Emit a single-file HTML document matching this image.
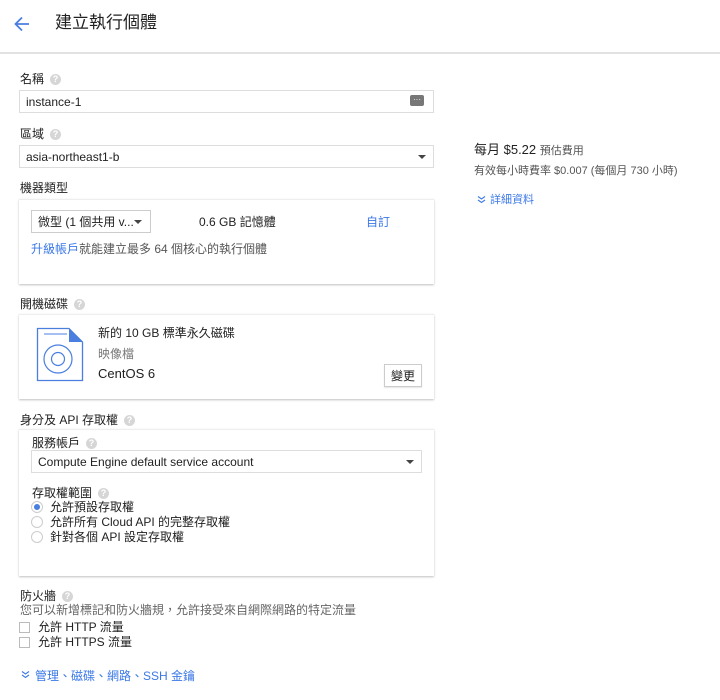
<!DOCTYPE html>
<html><head><meta charset="utf-8"><style>
*{margin:0;padding:0;box-sizing:border-box}
body{width:720px;height:700px;background:#fff;position:relative;overflow:hidden;font-family:"Liberation Sans","Noto Sans CJK TC",sans-serif;font-size:12px;line-height:14px;color:#212121}
.a{position:absolute;white-space:nowrap}
.box{position:absolute;border:1px solid #ddd;background:#fff}
.card{position:absolute;background:#fff;box-shadow:0 1px 2px rgba(0,0,0,.25);border-top:1px solid #eee}
.h{display:inline-block;width:11px;height:11px;border-radius:50%;background:#d6d6d6;color:#fff;font-size:9px;line-height:11px;text-align:center;vertical-align:middle;margin-left:6px;font-weight:bold}
.tri{position:absolute;width:0;height:0;border-left:4px solid transparent;border-right:4px solid transparent;border-top:4px solid #444}
.blue{color:#3b78e7}
.rad{position:absolute;width:12px;height:12px;border:1px solid #ccc;border-radius:50%;background:#fff}
.chk{position:absolute;width:11px;height:11px;border:1px solid #bbb;background:#fff}
</style></head><body>
<svg class="a" style="left:13px;top:15px" width="18" height="18" viewBox="0 0 18 18"><path d="M16 9H3M9 2.5L2.5 9 9 15.5" fill="none" stroke="#4a7fe0" stroke-width="1.8"/></svg>
<div class="a" style="left:55px;top:12px;font-size:17px;line-height:22px;color:#212121">建立執行個體</div>
<div class="a" style="left:0;top:52px;width:720px;height:2px;background:#e2e2e2"></div>

<div class="a" style="left:20px;top:72px">名稱<span class="h">?</span></div>
<div class="box" style="left:19px;top:90px;width:415px;height:23px"></div>
<div class="a" style="left:26px;top:95px">instance-1</div>
<div class="a" style="left:410px;top:95px;width:14px;height:11px;background:#777;border-radius:2px;color:#fff;font-size:8px;line-height:9px;text-align:center">···</div>

<div class="a" style="left:20px;top:127px">區域<span class="h">?</span></div>
<div class="box" style="left:19px;top:145px;width:415px;height:23px"></div>
<div class="a" style="left:26px;top:150px">asia-northeast1-b</div>
<div class="tri" style="left:418px;top:155px"></div>

<div class="a" style="left:20px;top:181px">機器類型</div>
<div class="card" style="left:19px;top:199px;width:415px;height:85px"></div>
<div class="box" style="left:31px;top:210px;width:120px;height:23px;border-color:#ccc"></div>
<div class="a" style="left:38px;top:215px">微型 (1 個共用 v...</div>
<div class="tri" style="left:134px;top:220px"></div>
<div class="a" style="left:199px;top:215px">0.6 GB 記憶體</div>
<div class="a blue" style="left:366px;top:215px">自訂</div>
<div class="a" style="left:31px;top:242px;color:#555"><span class="blue">升級帳戶</span>就能建立最多 64 個核心的執行個體</div>

<div class="a" style="left:20px;top:297px">開機磁碟<span class="h">?</span></div>
<div class="card" style="left:19px;top:314px;width:415px;height:85px"></div>
<svg class="a" style="left:36px;top:327px" width="48" height="55" viewBox="0 0 48 55"><path d="M1.5 1.5H33L46.5 15V53.5H1.5Z" fill="#fff" stroke="#4a7fe0" stroke-width="1.3"/><path d="M33 1.5V15H46.5Z" fill="#4a7fe0"/><path d="M8 7H31" stroke="#4a7fe0"/><circle cx="22" cy="32" r="14" fill="none" stroke="#4a7fe0" stroke-width="1.2"/><circle cx="22" cy="32" r="6.5" fill="none" stroke="#4a7fe0" stroke-width="1.2"/></svg>
<div class="a" style="left:98px;top:326px">新的 10 GB 標準永久磁碟</div>
<div class="a" style="left:98px;top:347px;color:#777">映像檔</div>
<div class="a" style="left:98px;top:366px;font-size:13px;line-height:16px">CentOS 6</div>
<div class="box" style="left:384px;top:364px;width:38px;height:23px;border-color:#ccc;box-shadow:0 1px 1px rgba(0,0,0,.1)"></div>
<div class="a" style="left:391px;top:369px">變更</div>

<div class="a" style="left:20px;top:413px">身分及 API 存取權<span class="h">?</span></div>
<div class="card" style="left:19px;top:429px;width:415px;height:147px"></div>
<div class="a" style="left:32px;top:436px">服務帳戶<span class="h">?</span></div>
<div class="box" style="left:31px;top:450px;width:391px;height:23px"></div>
<div class="a" style="left:38px;top:455px">Compute Engine default service account</div>
<div class="tri" style="left:406px;top:460px"></div>
<div class="a" style="left:32px;top:486px">存取權範圍<span class="h">?</span></div>
<div class="rad" style="left:31px;top:501px;border-color:#ccc"></div><div class="a" style="left:34px;top:504px;width:6px;height:6px;border-radius:50%;background:#4a7fe0"></div>
<div class="a" style="left:50px;top:500px">允許預設存取權</div>
<div class="rad" style="left:31px;top:516px"></div>
<div class="a" style="left:50px;top:515px">允許所有 Cloud API 的完整存取權</div>
<div class="rad" style="left:31px;top:531px"></div>
<div class="a" style="left:50px;top:530px">針對各個 API 設定存取權</div>

<div class="a" style="left:20px;top:589px">防火牆<span class="h">?</span></div>
<div class="a" style="left:20px;top:603px;color:#666">您可以新增標記和防火牆規，允許接受來自網際網路的特定流量</div>
<div class="chk" style="left:19px;top:622px"></div>
<div class="a" style="left:38px;top:620px">允許 HTTP 流量</div>
<div class="chk" style="left:19px;top:637px"></div>
<div class="a" style="left:38px;top:635px">允許 HTTPS 流量</div>
<svg class="a" style="left:21px;top:670px" width="9" height="9" viewBox="0 0 9 9"><path d="M1 1.5L4.5 4 8 1.5M1 5L4.5 7.5 8 5" fill="none" stroke="#3b78e7" stroke-width="1.1"/></svg>
<div class="a blue" style="left:35px;top:669px">管理、磁碟、網路、SSH 金鑰</div>

<div class="a" style="left:474px;top:142px;font-size:13px;line-height:16px">每月 $5.22 <span style="font-size:11px;color:#555">預估費用</span></div>
<div class="a" style="left:474px;top:164px;font-size:11px;color:#555">有效每小時費率 $0.007 (每個月 730 小時)</div>
<svg class="a" style="left:477px;top:195px" width="9" height="9" viewBox="0 0 9 9"><path d="M1 1.5L4.5 4 8 1.5M1 5L4.5 7.5 8 5" fill="none" stroke="#3b78e7" stroke-width="1.1"/></svg>
<div class="a blue" style="left:490px;top:193px;font-size:11px">詳細資料</div>
</body></html>
